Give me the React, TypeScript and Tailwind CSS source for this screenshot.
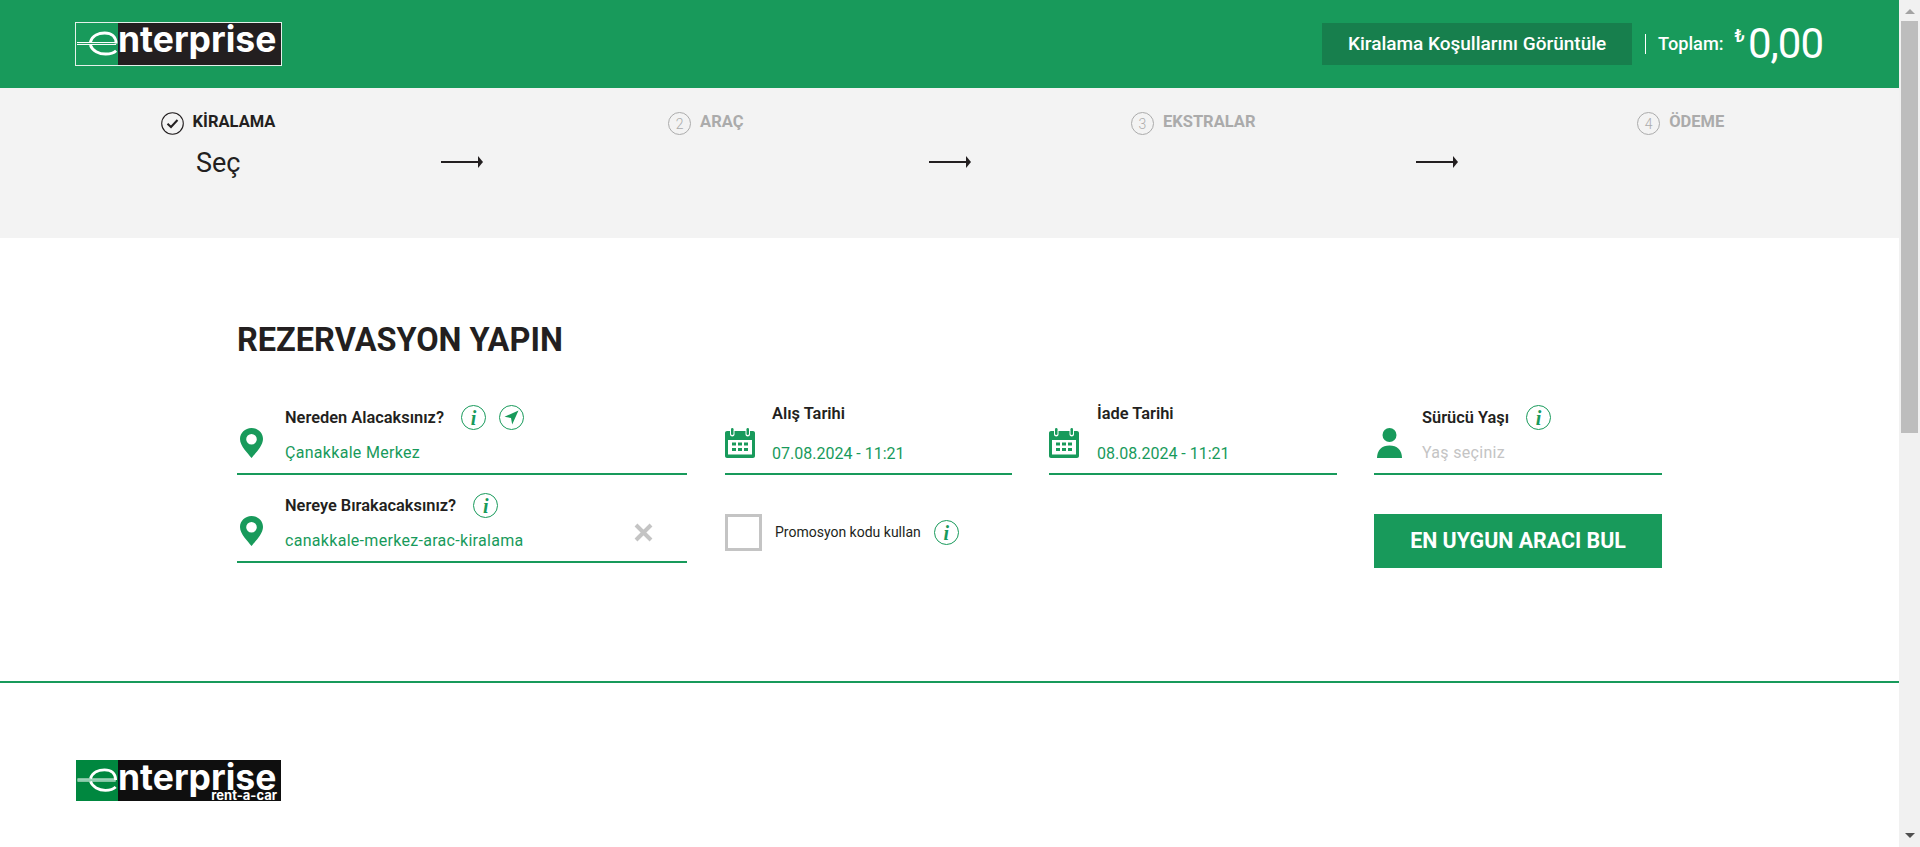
import React from 'react';

const sans = { fontFamily: 'Roboto, "Noto Sans", sans-serif' };
const logoFont = { fontFamily: 'Inter, "Liberation Sans", sans-serif' };

const Mark = () => (
  <svg viewBox="0 0 43 44" className="w-[43px] h-full shrink-0">
    <path d="M0 21.5H41" stroke="#fff" strokeWidth="3.2" fill="none" />
    <path d="M0 21.5H41" stroke="#189a5b" strokeWidth="1" fill="none" />
    <path d="M14 20C16 13 23 10.5 29 10.5C36 10.5 41 14 41 21.5" stroke="#fff" strokeWidth="3" fill="none" />
    <path d="M14 23C16 29 23 32.5 30 32.5C35 32.5 39 31 41 29" stroke="#fff" strokeWidth="3" fill="none" />
  </svg>
);

function Logo({ footer }: { footer?: boolean }) {
  if (footer) {
    return (
      <div className="flex h-[41px] w-[205px] bg-[#0f0f0f]">
        <div className="w-[42px] h-full bg-[#00873f] shrink-0 flex items-center">
          <Mark />
        </div>
        <div className="flex-1 flex flex-col items-end pr-[4px] text-white font-bold" style={logoFont}>
          <span className="self-start text-[35.5px] leading-[31px] pt-[2px] h-[31px]">nterprise</span>
          <span className="text-[13px] leading-[9px] font-bold">rent-a-car</span>
        </div>
      </div>
    );
  }
  return (
    <div className="flex h-[44px] w-[207px] border-[1.5px] border-[#e4f1ea]">
      <div className="w-[42px] h-full shrink-0 flex items-center">
        <Mark />
      </div>
      <div className="flex-1 bg-[#231f20] text-white font-bold text-[35.5px] leading-[34px]" style={logoFont}>
        nterprise
      </div>
    </div>
  );
}

const Info = () => (
  <span className="w-[25px] h-[25px] rounded-full border border-[#189a5b] flex items-center justify-center shrink-0 text-[#189a5b] text-[20px] font-bold italic leading-none" style={{ fontFamily: '"Liberation Serif", serif' }}>
    i
  </span>
);

const Locate = () => (
  <svg viewBox="0 0 25 25" className="w-[25px] h-[25px] shrink-0">
    <circle cx="12.5" cy="12.5" r="12" fill="none" stroke="#189a5b" />
    <path d="M19.5 5.5L5.5 11.8L12 13L13.2 19.5Z" fill="#189a5b" />
  </svg>
);

const Pin = () => (
  <svg viewBox="0 0 23 30" className="w-[23px] h-[30px]">
    <path fillRule="evenodd" d="M11.5 0C5 0 0 5 0 11C0 18 8 25.5 11.5 30C15 25.5 23 18 23 11C23 5 18 0 11.5 0ZM11.5 6A5.3 5.3 0 1 1 11.5 16.6A5.3 5.3 0 1 1 11.5 6Z" fill="#189a5b" />
  </svg>
);

const CalendarIcon = () => (
  <svg viewBox="0 0 30 30" className="w-[30px] h-[30px]">
    <path fillRule="evenodd" d="M2 3H5V6.5C5 9 9.5 9 9.5 6.5V3H20.5V6.5C20.5 9 25 9 25 6.5V3H28C29.1 3 30 3.9 30 5V28C30 29.1 29.1 30 28 30H2C.9 30 0 29.1 0 28V5C0 3.9 .9 3 2 3ZM3 12V26.5H27V12Z" fill="#189a5b" />
    <rect x="6" y="0" width="2.5" height="7" rx="1.2" fill="#189a5b" />
    <rect x="21.5" y="0" width="2.5" height="7" rx="1.2" fill="#189a5b" />
    <path d="M7 14.5h4v3h-4zM13 14.5h4v3h-4zM19 14.5h4v3h-4zM7 20h4v3h-4zM13 20h4v3h-4zM19 20h4v3h-4z" fill="#189a5b" />
  </svg>
);

const Person = () => (
  <svg viewBox="0 0 25 30" className="w-[25px] h-[30px]">
    <circle cx="12.5" cy="7" r="7" fill="#189a5b" />
    <path d="M0 30C0 22 5 17.5 12.5 17.5C20 17.5 25 22 25 30Z" fill="#189a5b" />
  </svg>
);

const Arrow = () => (
  <svg viewBox="0 0 42 12" className="absolute right-[-21px] top-[68px] w-[42px] h-[12px]">
    <path d="M0 6H38" stroke="#231f20" strokeWidth="2" />
    <path d="M37 0L42 6L37 12Z" fill="#231f20" />
  </svg>
);

function Step({ n, label, width, active, arrow }: { n: string; label: string; width: string; active?: boolean; arrow?: boolean }) {
  return (
    <div className={`relative shrink-0 ${width}`}>
      <div className="flex justify-center gap-[9px] pt-[24px]">
        {active ? (
          <svg viewBox="0 0 23 23" className="w-[23px] h-[23px]">
            <circle cx="11.5" cy="11.5" r="10.8" fill="none" stroke="#231f20" strokeWidth="1.1" />
            <path d="M6.5 11.8L10 15L16.5 8" fill="none" stroke="#231f20" strokeWidth="2" />
          </svg>
        ) : (
          <span className="w-[23px] h-[23px] rounded-full border border-[#ababab] text-[#ababab] text-[14px] leading-none font-light flex items-center justify-center">{n}</span>
        )}
        <span className={`text-[16.5px] leading-[18px] font-bold mt-px ${active ? 'text-[#231f20]' : 'text-[#ababab]'}`}>{label}</span>
      </div>
      {active && <div className="text-[27px] leading-[34px] pl-[196px] mt-[11px] text-[#231f20]">Seç</div>}
      {arrow && <Arrow />}
    </div>
  );
}

function Field({ icon, label, value, extra, width, muted, date, iconWidth = 'w-[48px]', iconPad = 'pl-[3px]', clear }: {
  icon: React.ReactNode; label: string; value: string; extra?: React.ReactNode; width: string; muted?: boolean; date?: boolean; iconWidth?: string; iconPad?: string; clear?: boolean;
}) {
  return (
    <div className={`flex items-end h-[75px] border-b-2 border-[#189a5b] shrink-0 pb-[15px] ${width}`}>
      <div className={`shrink-0 flex ${iconWidth} ${iconPad}`}>{icon}</div>
      <div className={`flex-1 flex flex-col ${date ? 'pt-0' : 'pt-[5px]'} self-start`}>
        <div className={`flex items-center gap-[17px] ${date ? 'h-[28px]' : 'h-[25px]'}`}>
          <span className="text-[16.4px] font-semibold text-[#231f20] leading-none mt-px">{label}</span>
          {extra}
        </div>
        <div className={`text-[16px] leading-[24px] ${date ? 'mt-[14px]' : 'mt-[11px] tracking-[0.3px]'} ${muted ? 'text-[#c4c4c4]' : 'text-[#189a5b]'}`}>{value}</div>
      </div>
      {clear && (
        <svg viewBox="0 0 19 19" className="w-[19px] h-[19px] mr-[34px] mb-[4px]">
          <path d="M2 2L17 17M17 2L2 17" stroke="#c4c4c4" strokeWidth="4" />
        </svg>
      )}
    </div>
  );
}

export default function App() {
  return (
    <div className="flex h-[847px] overflow-hidden bg-white" style={sans}>
      <div className="flex-1 min-w-0 flex flex-col">
        <header className="h-[88px] shrink-0 bg-[#189a5b] flex items-center pl-[75px] pr-[76px]">
          <Logo />
          <div className="ml-auto flex items-center">
            <button className="w-[310px] h-[42px] bg-[#177f4d] text-white text-[19px] font-medium">Kiralama Koşullarını Görüntüle</button>
            <span className="w-px h-[20px] bg-white ml-[13px] mr-[12px]" />
            <span className="text-white text-[18.2px] font-medium">Toplam:</span>
            <span className="text-white text-[18px] ml-[11px] mb-[18px] font-medium">₺</span>
            <span className="text-white text-[42px] leading-none font-normal tracking-[-1px] ml-[3px]">0,00</span>
          </div>
        </header>

        <div className="h-[150px] shrink-0 bg-[#f3f3f3] flex overflow-hidden">
          <Step n="1" label="KİRALAMA" width="w-[462px] pr-[26px]" active arrow />
          <Step n="2" label="ARAÇ" width="w-[487.5px]" arrow />
          <Step n="3" label="EKSTRALAR" width="w-[487.5px]" arrow />
          <Step n="4" label="ÖDEME" width="w-[487.5px]" />
        </div>

        <main className="h-[445px] shrink-0 border-b-2 border-[#189a5b] pl-[237px] pt-[84px]">
          <h1 className="text-[32.5px] leading-[36px] font-bold text-[#231f20]">REZERVASYON YAPIN</h1>
          <div className="flex gap-[37px] mt-[42px]">
            <Field
              width="w-[450px] mr-px"
              icon={<Pin />}
              label="Nereden Alacaksınız?"
              value="Çanakkale Merkez"
              extra={<span className="flex gap-[13px]"><Info /><Locate /></span>}
            />
            <Field width="w-[287px]" iconWidth="w-[47px]" iconPad="pl-0" date icon={<CalendarIcon />} label="Alış Tarihi" value="07.08.2024 - 11:21" />
            <Field width="w-[288px]" date iconPad="pl-0" icon={<CalendarIcon />} label="İade Tarihi" value="08.08.2024 - 11:21" />
            <Field width="w-[288px]" icon={<Person />} label="Sürücü Yaşı" value="Yaş seçiniz" muted extra={<Info />} />
          </div>
          <div className="flex gap-[37px] mt-[13px]">
            <Field width="w-[450px] mr-px" icon={<Pin />} label="Nereye Bırakacaksınız?" value="canakkale-merkez-arac-kiralama" extra={<Info />} clear />
            <div className="w-[612px] flex items-start pt-[26px] shrink-0">
              <span className="w-[37px] h-[37px] border-[3px] border-[#c4c4c4] shrink-0" />
              <span className="ml-[13px] mt-[9px] text-[14px] leading-[18px] text-[#231f20]">Promosyon kodu kullan</span>
              <span className="ml-[13px] mt-[6px]"><Info /></span>
            </div>
            <button className="w-[288px] h-[54px] mt-[26px] bg-[#189a5b] text-white text-[21.4px] font-bold">EN UYGUN ARACI BUL</button>
          </div>
        </main>

        <footer className="flex-1 pl-[76px] pt-[77px]">
          <Logo footer />
        </footer>
      </div>

      <aside className="w-[21px] shrink-0 bg-[#f1f1f1] flex flex-col items-center justify-between pt-[9px] pb-[9px] relative">
        <span className="w-0 h-0 border-x-[5px] border-x-transparent border-b-[5px] border-b-[#a3a3a3]" />
        <span className="absolute left-[2px] top-[21px] w-[17px] h-[412px] bg-[#bdbdbd]" />
        <span className="w-0 h-0 border-x-[5px] border-x-transparent border-t-[5px] border-t-[#505050]" />
      </aside>
    </div>
  );
}
